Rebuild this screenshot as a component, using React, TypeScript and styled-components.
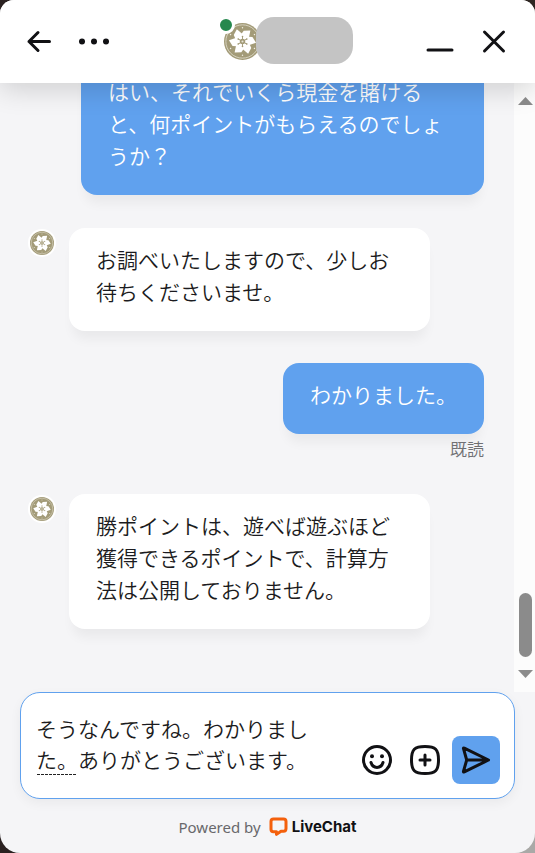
import React, { useState } from "react";
import styled, { createGlobalStyle, css } from "styled-components";

const GlobalStyle = createGlobalStyle`
  *, *::before, *::after { box-sizing: border-box; }
  body {
    margin: 0;
    background: linear-gradient(#2a2120, #2a2120) left / 50% 100% no-repeat,
      linear-gradient(#2f2723 50%, #a9a9a7 50%);
    color: #1b1b20;
    font-family: "Noto Sans CJK JP", sans-serif;
  }
  button { font: inherit; }
`;

const Widget = styled.main`
  display: flex;
  flex-direction: column;
  height: 100vh;
  overflow: hidden;
  background: #f5f5f7;
  border-radius: 14px 14px 20px 20px;
`;

const Header = styled.header`
  position: relative;
  z-index: 1;
  flex: none;
  display: flex;
  align-items: center;
  justify-content: space-between;
  height: 83px;
  padding: 0 17px 0 15px;
  background: #fff;
  box-shadow: 0 6px 28px rgba(0, 0, 0, 0.16);
`;

const HeaderGroup = styled.div`
  display: flex;
  gap: 7px;
`;

const IconButton = styled.button`
  display: grid;
  place-items: center;
  width: 48px;
  height: 48px;
  padding: 0;
  border: 0;
  border-radius: 8px;
  background: none;
  color: #111114;
  cursor: pointer;
`;

const SendButton = styled(IconButton)`
  margin-left: 3px;
  background: #60a1ee;
`;

const Agent = styled.div`
  position: relative;
  display: flex;
  align-items: center;
  margin-left: 43px;
`;

const AgentName = styled.div`
  width: 97px;
  height: 47px;
  margin: 0 0 2px -5px;
  border-radius: 18px;
  background: #c4c4c4;
  z-index: 1;
`;

const StatusDot = styled.span`
  position: absolute;
  left: -7px;
  top: -1px;
  width: 18px;
  height: 18px;
  border: 3px solid #fff;
  border-radius: 50%;
  background: #26884e;
`;

const Body = styled.section`
  flex: 1;
  display: flex;
  min-height: 0;
`;

const Messages = styled.div`
  flex: 1;
  display: flex;
  flex-direction: column;
  justify-content: flex-end;
  min-width: 0;
  overflow: hidden;
  padding: 0 30px 63px 28px;
`;

const AgentRow = styled.div`
  display: flex;
  align-items: flex-start;
  gap: 13px;
  margin: 33px 54px 0 0;
`;

const UserRow = styled.div`
  display: flex;
  flex-direction: column;
  align-items: flex-end;
  margin: 32px 0 0 53px;
`;

const AvatarRing = styled.div`
  flex: none;
  display: grid;
  place-items: center;
  width: 28px;
  height: 28px;
  margin-top: 1px;
  border-radius: 50%;
  background: #fff;
`;

const Bubble = styled.p<{ $own?: boolean }>`
  margin: 0;
  padding: 15px 27px 24px;
  border-radius: 16px;
  font-size: 21px;
  line-height: 32px;
  font-weight: 350;
  box-shadow: 0 12px 12px -4px rgba(0, 0, 0, 0.05);
  ${({ $own }) =>
    $own
      ? css`background: #60a1ee; color: #fff;`
      : css`flex: 1; background: #fff; color: #1b1b20;`}
`;

const ReadMark = styled.span`
  height: 27px;
  color: #707073;
  font-size: 17px;
  line-height: 30px;
  font-weight: 350;
`;

const ScrollTrack = styled.div`
  flex: none;
  display: flex;
  flex-direction: column;
  align-items: center;
  width: 21px;
  padding: 14px 0 14px 1px;
  background: #fcfcfc;
`;

const ScrollThumb = styled.div`
  width: 13px;
  height: 64px;
  margin: auto 0 13px;
  border-radius: 7px;
  background: #8b8b8b;
`;

const Composer = styled.form`
  flex: none;
  display: flex;
  align-items: flex-end;
  margin: 0 20px;
  padding: 20px 14px 14px 15px;
  border: 1px solid #60a1ee;
  border-radius: 20px;
  background: #fff;
  box-shadow: 0 4px 12px rgba(0, 0, 0, 0.05);
`;

const Field = styled.div`
  position: relative;
  flex: 1;
  height: 71px;
  margin-right: 32px;
`;

const TextBox = styled.textarea`
  display: block;
  width: 100%;
  height: 62px;
  padding: 0;
  border: 0;
  outline: 0;
  resize: none;
  overflow: hidden;
  background: none;
  color: #1b1b20;
  font-family: inherit;
  font-size: 21px;
  line-height: 31px;
  font-weight: 350;
`;

const ComposingMark = styled.span`
  position: absolute;
  left: 1px;
  top: 61px;
  width: 39px;
  height: 1px;
  background: repeating-linear-gradient(90deg, #222 0 3px, transparent 3px 4px);
`;

const Footer = styled.footer`
  flex: none;
  display: flex;
  align-items: center;
  justify-content: center;
  gap: 8px;
  height: 54px;
  padding-top: 2px;
  color: #68686b;
  font-family: "Noto Sans", sans-serif;
  font-size: 15px;
  line-height: 20px;
`;

const Brand = styled.a`
  display: flex;
  align-items: center;
  gap: 4px;
  color: #111114;
  font-family: Inter, sans-serif;
  font-size: 15px;
  font-weight: 700;
  text-decoration: none;
`;

const PETALS = [0, 60, 120, 180, 240, 300];

function Crest({ size }: { size: number }) {
  return (
    <svg width={size} height={size} viewBox="0 0 36 36" aria-hidden="true">
      <circle cx="18" cy="18" r="18" fill="#a39b78" />
      <circle cx="18" cy="18" r="16.2" fill="none" stroke="#e9e6d8" strokeWidth="0.7" />
      {PETALS.map((angle) => (
        <g key={angle} transform={`rotate(${angle + 25} 18 18)`}>
          <path d="M18 18L13.8 12.4L14.6 8L20.4 5L22.2 12.4Z" fill="#fff" />
        </g>
      ))}
      {PETALS.map((angle) => (
        <g key={angle} transform={`rotate(${angle} 18 18)`}>
          <circle cx="18" cy="4.6" r="0.7" fill="#f3f0e4" />
          <path d="M18 16V13.6" stroke="#a39b78" strokeWidth="0.9" />
          <circle cx="18" cy="13.2" r="0.8" fill="#a39b78" />
        </g>
      ))}
      <circle cx="18" cy="18" r="2.6" fill="#a39b78" />
      <circle cx="18" cy="18" r="1" fill="#e9e6d8" />
    </svg>
  );
}

type IconProps = { children: React.ReactNode; width?: number };

function Icon({ children, width = 3 }: IconProps) {
  return (
    <svg width="36" height="36" viewBox="0 0 36 36" fill="none" stroke="currentColor" strokeWidth={width} strokeLinecap="round" strokeLinejoin="round" aria-hidden="true">
      {children}
    </svg>
  );
}

function ScrollArrow({ down }: { down?: boolean }) {
  return (
    <svg width="15" height="8" viewBox="0 0 15 8" aria-hidden="true">
      <path d={down ? "M0 0H15L7.5 8Z" : "M0 8H15L7.5 0Z"} fill="#8b8b8b" />
    </svg>
  );
}

function AgentMessage({ children }: { children: React.ReactNode }) {
  return (
    <AgentRow>
      <AvatarRing><Crest size={24} /></AvatarRing>
      <Bubble>{children}</Bubble>
    </AgentRow>
  );
}

export default function App() {
  const [draft, setDraft] = useState("そうなんですね。わかりました。ありがとうございます。");
  return (
    <Widget lang="ja">
      <GlobalStyle />
      <Header>
        <HeaderGroup>
          <IconButton type="button" aria-label="戻る">
            <Icon><path d="M28.5 17.5H8M17 8.5L8 17.5L17 26.5" /></Icon>
          </IconButton>
          <IconButton type="button" aria-label="メニュー">
            <Icon>
              <g fill="currentColor" stroke="none">
                <circle cx="6" cy="17.5" r="3" />
                <circle cx="18" cy="17.5" r="3" />
                <circle cx="30" cy="17.5" r="3" />
              </g>
            </Icon>
          </IconButton>
        </HeaderGroup>
        <Agent>
          <Crest size={37} />
          <StatusDot />
          <AgentName />
        </Agent>
        <HeaderGroup>
          <IconButton type="button" aria-label="最小化">
            <Icon><path d="M7 26H31" /></Icon>
          </IconButton>
          <IconButton type="button" aria-label="閉じる">
            <Icon><path d="M8.5 8L27.5 27M27.5 8L8.5 27" /></Icon>
          </IconButton>
        </HeaderGroup>
      </Header>
      <Body>
        <Messages>
          <UserRow>
            <Bubble $own>はい、それでいくら現金を賭けると、何ポイントがもらえるのでしょうか？</Bubble>
          </UserRow>
          <AgentMessage>お調べいたしますので、少しお待ちくださいませ。</AgentMessage>
          <UserRow>
            <Bubble $own>わかりました。</Bubble>
            <ReadMark>既読</ReadMark>
          </UserRow>
          <AgentMessage>勝ポイントは、遊べば遊ぶほど獲得できるポイントで、計算方法は公開しておりません。</AgentMessage>
        </Messages>
        <ScrollTrack>
          <ScrollArrow />
          <ScrollThumb />
          <ScrollArrow down />
        </ScrollTrack>
      </Body>
      <Composer onSubmit={(event) => event.preventDefault()}>
        <Field>
          <TextBox aria-label="メッセージ" value={draft} onChange={(event) => setDraft(event.target.value)} />
          <ComposingMark />
        </Field>
        <IconButton type="button" aria-label="絵文字">
          <Icon>
            <circle cx="18" cy="18" r="13.5" />
            <path d="M12 20.5C14 27 22 27 24 20.5" />
            <g fill="currentColor" stroke="none">
              <circle cx="13" cy="14.3" r="2" />
              <circle cx="23" cy="14.3" r="2" />
            </g>
          </Icon>
        </IconButton>
        <IconButton type="button" aria-label="添付">
          <Icon>
            <path d="M18 4.5C28.5 4.5 31.5 7.5 31.5 18S28.5 31.5 18 31.5S4.5 28.5 4.5 18S7.5 4.5 18 4.5Z" />
            <path d="M18 13V23M13 18H23" />
          </Icon>
        </IconButton>
        <SendButton type="submit" aria-label="送信">
          <Icon>
            <path d="M5.5 6.7Q5.2 5.7 6.3 6.1L30.5 18L6.3 29.9Q5.2 30.3 5.5 29.3L8.7 18ZM8.7 18H30" />
          </Icon>
        </SendButton>
      </Composer>
      <Footer>
        <span>Powered by</span>
        <Brand href="#">
          <svg width="19" height="20" viewBox="0 0 19 20" aria-hidden="true">
            <path d="M7.5 17.4V14.8H4.5Q2 14.8 2 12.3V4.5Q2 2 4.5 2H14.5Q17 2 17 4.5V11.5Q17 14.2 14.5 14.2H12Z" fill="none" stroke="#f4600c" strokeWidth="3" strokeLinejoin="round" />
          </svg>
          LiveChat
        </Brand>
      </Footer>
    </Widget>
  );
}
